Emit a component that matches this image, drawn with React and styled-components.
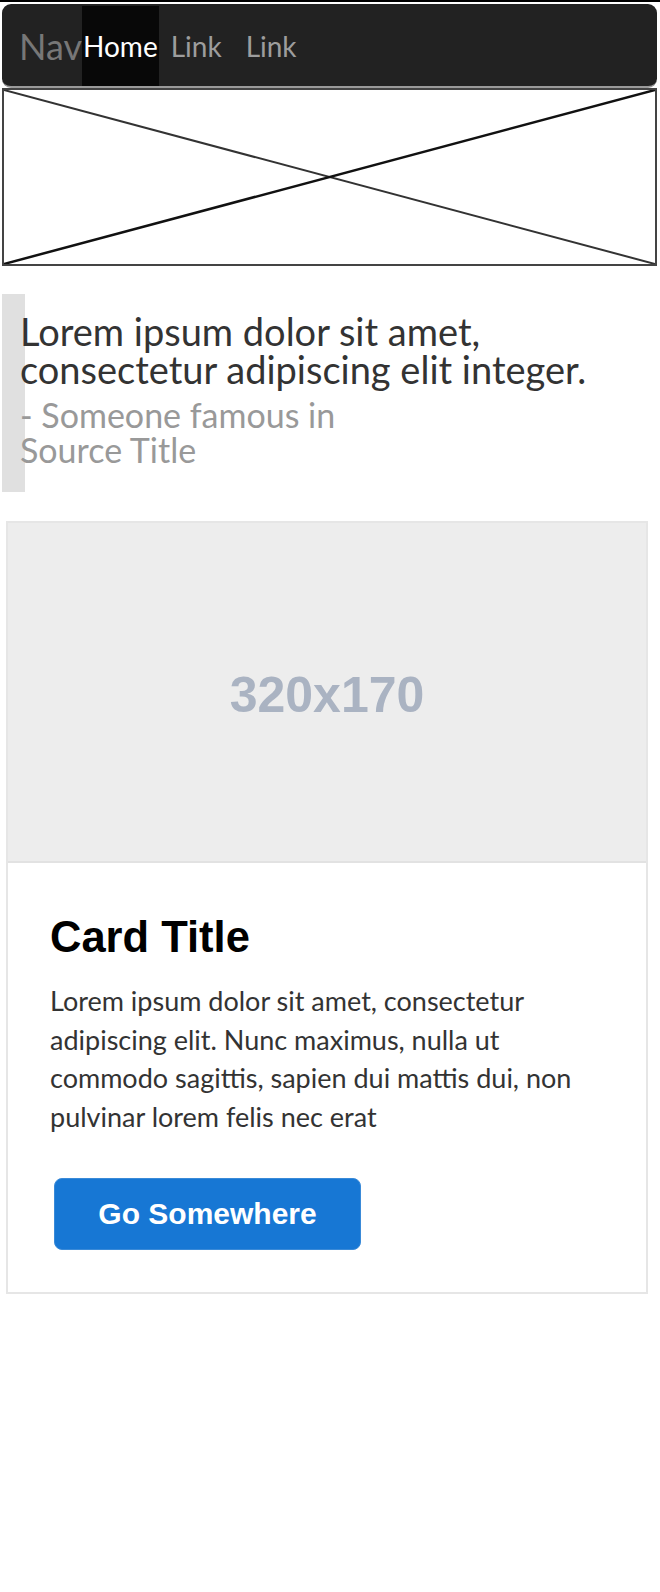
import React from 'react';
import styled, { createGlobalStyle } from 'styled-components';

const GlobalStyle = createGlobalStyle`
  html, body {
    margin: 0;
    padding: 0;
    background: #fff;
  }

  body {
    font-family: Lato, 'Noto Sans', sans-serif;
    color: #333;
  }

  * {
    box-sizing: border-box;
  }
`;

const StyledPage = styled.div`
  width: 660px;
  min-height: 1592px;
  border-top: 2px solid #000;
`;

const StyledNavbar = styled.nav`
  display: flex;
  align-items: stretch;
  height: 84px;
  margin: 2px 3px 0 2px;
  padding: 2px 0 0 17px;
  background: #222;
  border-radius: 9px;
  border-bottom: 2px solid #9a9a9a;
`;

const StyledBrand = styled.a`
  display: flex;
  align-items: center;
  font-size: 36px;
  color: #777;
  text-decoration: none;
`;

const StyledNavLink = styled.a`
  display: flex;
  align-items: center;
  padding: ${({ active }) => (active ? '0 1px' : '0 12px')};
  font-size: 28px;
  color: ${({ active }) => (active ? '#fff' : '#9d9d9d')};
  background: ${({ active }) => (active ? '#080808' : 'transparent')};
  text-decoration: none;
`;

const StyledPlaceholder = styled.div`
  height: 178px;
  margin: 0 3px 0 2px;
  border: 2px solid #444;

  svg {
    display: block;
    width: 100%;
    height: 100%;
  }
`;

const StyledQuote = styled.blockquote`
  width: 640px;
  margin: 28px 0 0 2px;
  padding: 18px 0 25px 18px;
  background: linear-gradient(to right, #e0e0e0 23px, transparent 23px);
  white-space: nowrap;
`;

const StyledQuoteText = styled.p`
  margin: 0 0 9px;
  font-size: 38px;
  line-height: 38px;
  color: #333;
`;

const StyledCite = styled.footer`
  font-size: 34px;
  line-height: 35px;
  color: #999;
`;

const StyledCard = styled.div`
  width: 642px;
  margin: 29px 0 0 6px;
  border: 2px solid #e6e6e6;
`;

const StyledCardImage = styled.div`
  display: flex;
  align-items: center;
  justify-content: center;
  height: 340px;
  padding-top: 6px;
  background: #ededed;
  border-bottom: 2px solid #e2e2e2;
  font-family: 'Liberation Sans', Arial, sans-serif;
  font-weight: 700;
  font-size: 50px;
  color: #aab3c2;
`;

const StyledCardBody = styled.div`
  padding: 48px 42px 42px;
`;

const StyledCardTitle = styled.h5`
  margin: 0 0 19px;
  font-family: 'Liberation Sans', Arial, sans-serif;
  font-weight: 700;
  font-size: 43.5px;
  line-height: 52px;
  color: #000;
`;

const StyledCardText = styled.p`
  margin: 0 0 42px;
  font-size: 27px;
  line-height: 38.5px;
  color: #333;
`;

const StyledButton = styled.a`
  display: flex;
  align-items: center;
  justify-content: center;
  width: 307px;
  height: 72px;
  margin-left: 4px;
  background: #1777d4;
  border: 1px solid #3a8ad8;
  border-radius: 8px;
  font-family: 'Liberation Sans', Arial, sans-serif;
  font-weight: 700;
  font-size: 30px;
  color: #fff;
  text-decoration: none;
`;

const App = () => (
  <>
    <GlobalStyle />
    <StyledPage>
      <StyledNavbar>
        <StyledBrand href="#">Nav</StyledBrand>
        <StyledNavLink href="#" active>
          Home
        </StyledNavLink>
        <StyledNavLink href="#">Link</StyledNavLink>
        <StyledNavLink href="#">Link</StyledNavLink>
      </StyledNavbar>
      <StyledPlaceholder>
        <svg viewBox="0 0 100 100" preserveAspectRatio="none">
          <line x1="0" y1="0" x2="100" y2="100" stroke="#333" strokeWidth="2" vectorEffect="non-scaling-stroke" />
          <line x1="0" y1="100" x2="100" y2="0" stroke="#111" strokeWidth="2.5" vectorEffect="non-scaling-stroke" />
        </svg>
      </StyledPlaceholder>
      <StyledQuote>
        <StyledQuoteText>
          Lorem ipsum dolor sit amet,
          <br />
          consectetur adipiscing elit integer.
        </StyledQuoteText>
        <StyledCite>
          - Someone famous in
          <br />
          Source Title
        </StyledCite>
      </StyledQuote>
      <StyledCard>
        <StyledCardImage>320x170</StyledCardImage>
        <StyledCardBody>
          <StyledCardTitle>Card Title</StyledCardTitle>
          <StyledCardText>
            Lorem ipsum dolor sit amet, consectetur adipiscing elit. Nunc maximus, nulla ut commodo sagittis,
            sapien dui mattis dui, non pulvinar lorem felis nec erat
          </StyledCardText>
          <StyledButton href="#">Go Somewhere</StyledButton>
        </StyledCardBody>
      </StyledCard>
    </StyledPage>
  </>
);

export default App;
